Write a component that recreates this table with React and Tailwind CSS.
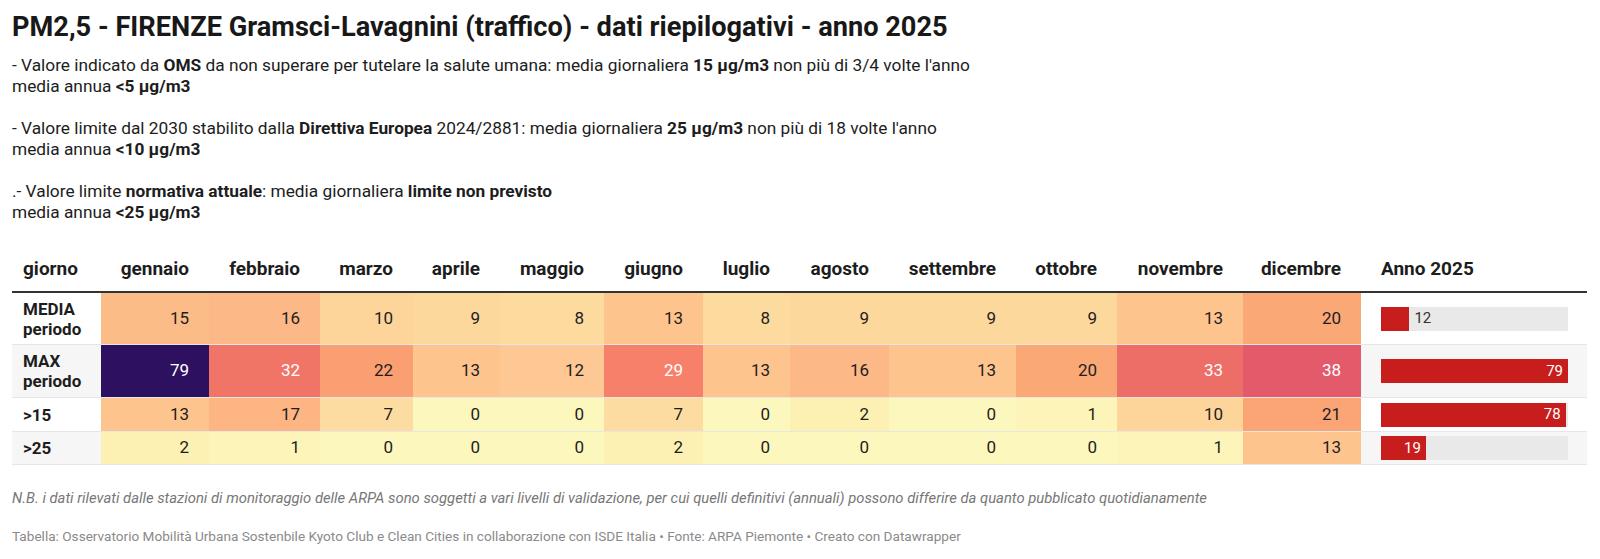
import React from "react";

const months = [
  "gennaio", "febbraio", "marzo", "aprile", "maggio", "giugno",
  "luglio", "agosto", "settembre", "ottobre", "novembre", "dicembre",
];

// heatmap colours picked by value
const heat = {
  0: "#fcf8bd", 1: "#fcf4b8", 2: "#fcf0b3", 7: "#fddca2", 8: "#fddb9f",
  9: "#fdd89c", 10: "#fdd49a", 12: "#fdc893", 13: "#fdc48e", 15: "#fcbc88",
  16: "#fcb886", 17: "#fcb583", 20: "#fba877", 21: "#fba576", 22: "#fa9f72",
  29: "#f6806a", 32: "#f07567", 33: "#ec6e66", 38: "#e35a6a", 79: "#2d1160",
};
const darkText = [79, 38, 33, 32, 29];

const rows = [
  { label: ["MEDIA", "periodo"], values: [15, 16, 10, 9, 8, 13, 8, 9, 9, 9, 13, 20], total: 12, h: "h-[52px]", zebra: false },
  { label: ["MAX", "periodo"], values: [79, 32, 22, 13, 12, 29, 13, 16, 13, 20, 33, 38], total: 79, h: "h-[53px]", zebra: true },
  { label: [">15"], values: [13, 17, 7, 0, 0, 7, 0, 2, 0, 1, 10, 21], total: 78, h: "h-[34px]", zebra: false },
  { label: [">25"], values: [2, 1, 0, 0, 0, 2, 0, 0, 0, 0, 1, 13], total: 19, h: "h-[33px]", zebra: true },
];

const grid =
  "grid grid-cols-[89px_108px_111px_93px_87px_104px_99px_87px_99px_127px_101px_126px_118px_226px]";

function Bar({ value }) {
  const pct = (value / 79) * 100;
  const inside = value > 15;
  return (
    <div className="pl-[20px] pr-[19px] flex items-center h-full">
      <div className="relative w-full h-[24px] bg-[#e9e9e9]">
        <div className="absolute left-0 top-0 h-full bg-[#c71e1d]" style={{ width: `${pct}%` }} />
        {inside ? (
          <span
            className="absolute top-0 h-full flex items-center justify-end pr-[5px] text-[15px] text-white"
            style={{ width: `${pct}%` }}
          >
            {value}
          </span>
        ) : (
          <span
            className="absolute top-0 h-full flex items-center pl-[5px] text-[15px] text-[#333]"
            style={{ left: `${pct}%` }}
          >
            {value}
          </span>
        )}
      </div>
    </div>
  );
}

export default function App() {
  return (
    <div className="min-h-screen bg-white text-[#1d1d1d] [font-family:Roboto,sans-serif] px-[12px] pt-[12px]">
      <h1 className="text-[27.2px] leading-[30px] font-bold text-[#181818]">
        PM2,5 - FIRENZE Gramsci-Lavagnini (traffico) - dati riepilogativi - anno 2025
      </h1>

      <div className="mt-[13px] text-[17.3px] leading-[21px] text-[#1d1d1d]">
        <p>
          - Valore indicato da <b>OMS</b> da non superare per tutelare la salute umana: media giornaliera{" "}
          <b>15 µg/m3</b> non più di 3/4 volte l'anno
          <br />
          media annua <b>&lt;5 µg/m3</b>
        </p>
        <p className="mt-[21px]">
          - Valore limite dal 2030 stabilito dalla <b>Direttiva Europea</b> 2024/2881: media giornaliera{" "}
          <b>25 µg/m3</b> non più di 18 volte l'anno
          <br />
          media annua <b>&lt;10 µg/m3</b>
        </p>
        <p className="mt-[21px]">
          .- Valore limite <b>normativa attuale</b>: media giornaliera <b>limite non previsto</b>
          <br />
          media annua <b>&lt;25 µg/m3</b>
        </p>
      </div>

      <div className="mt-[27px] w-[1575px]">
        <div className={`${grid} h-[43px] pb-[3px] items-center border-b-2 border-[#333] text-[19px] font-bold`}>
          <div className="pl-[11px]">giorno</div>
          {months.map((m) => (
            <div key={m} className="text-right pr-[20px]">{m}</div>
          ))}
          <div className="pl-[20px]">Anno 2025</div>
        </div>

        {rows.map((r, i) => (
          <div key={i} className={`${grid} ${r.h} border-b border-[#e6e6e6] ${r.zebra ? "bg-[#f6f6f6]" : "bg-white"}`}>
            <div className="pl-[11px] flex flex-col justify-center text-[17px] leading-[20px] font-bold">
              {r.label.map((l) => (
                <span key={l}>{l}</span>
              ))}
            </div>
            {r.values.map((v, j) => (
              <div
                key={j}
                className={`flex items-center justify-end pr-[20px] text-[17px] ${darkText.includes(v) ? "text-white" : "text-[#1d1d1d]"}`}
                style={{ backgroundColor: heat[v] }}
              >
                {v}
              </div>
            ))}
            <Bar value={r.total} />
          </div>
        ))}
      </div>

      <p className="mt-[23px] text-[14.8px] leading-[20px] italic text-[#777]">
        N.B. i dati rilevati dalle stazioni di monitoraggio delle ARPA sono soggetti a vari livelli di validazione, per cui quelli definitivi (annuali) possono differire da quanto pubblicato quotidianamente
      </p>
      <p className="mt-[19px] text-[13.6px] leading-[18px] text-[#8a8a8a]">
        Tabella: Osservatorio Mobilità Urbana Sostenbile Kyoto Club e Clean Cities in collaborazione con ISDE Italia • Fonte: ARPA Piemonte • Creato con Datawrapper
      </p>
    </div>
  );
}
